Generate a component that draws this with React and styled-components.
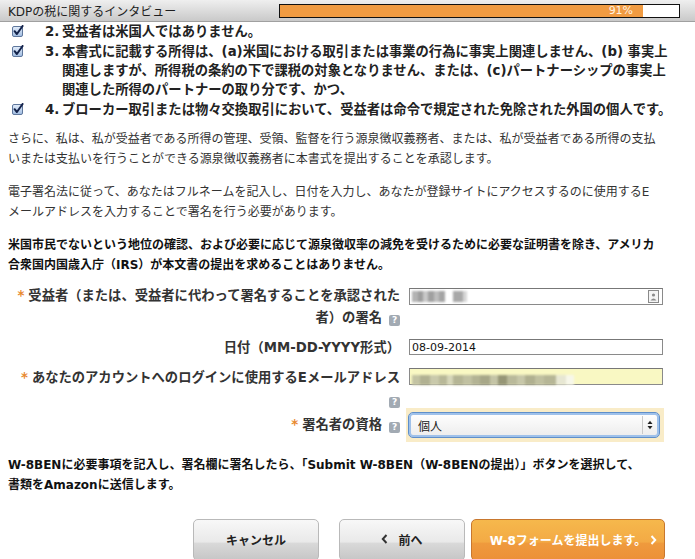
import React from "react";
import styled, { createGlobalStyle } from "styled-components";

const Global = createGlobalStyle`
  html, body { margin: 0; padding: 0; overflow: hidden; background: #fff; }
  body { font-family: "DejaVu Sans", "Noto Sans CJK JP", sans-serif; color: #333; }
`;

const Page = styled.div`
  width: 695px;
  height: 559px;
  display: flex;
  flex-direction: column;
  overflow: hidden;
`;

const Header = styled.header`
  height: 21px;
  flex-shrink: 0;
  display: flex;
  align-items: center;
  justify-content: space-between;
  padding: 0 15px 0 8px;
  background: linear-gradient(#efefef, #c9c9c9);
  border-bottom: 1px solid #a0a0a0;
`;

const Title = styled.div`
  font-size: 12px;
  color: #1e1e1e;
  white-space: nowrap;
`;

const Progress = styled.div`
  width: 399px;
  height: 12px;
  border: 1px solid #111;
  background: #fff;
  display: flex;
`;

const ProgressFill = styled.div`
  height: 100%;
  background: #f09b42;
  display: flex;
  align-items: center;
  justify-content: flex-end;
  padding-right: 10px;
  box-sizing: border-box;
  font-size: 11px;
  line-height: 12px;
  color: #fff4e2;
`;

const List = styled.div`
  display: flex;
  flex-direction: column;
  gap: 1px;
`;

const Item = styled.div`
  display: flex;
  align-items: flex-start;
  padding-left: 12px;
  font-size: 13.3px;
  font-weight: bold;
  line-height: 19px;
  color: #222;
`;

const CheckBox = styled.svg`
  flex-shrink: 0;
  width: 12px;
  height: 12px;
  margin-top: 3px;
  margin-right: 21px;
`;

const Num = styled.span`
  flex-shrink: 0;
  width: 17px;
  white-space: nowrap;
`;

const ItemText = styled.span`
  white-space: nowrap;
`;

const Para = styled.p`
  margin: ${(p) => p.$mt || 0}px 0 0 0;
  padding: 0 8px;
  font-size: 12px;
  line-height: 20px;
  white-space: nowrap;
  color: ${(p) => (p.$bold ? "#111" : "#333")};
  font-weight: ${(p) => (p.$bold ? "bold" : "normal")};
`;

const Form = styled.div`
  display: flex;
  flex-direction: column;
  margin-top: 10px;
`;

const FormRow = styled.div`
  display: grid;
  grid-template-columns: 392px 254px;
  column-gap: 9px;
  padding-left: 8px;
  margin-top: ${(p) => p.$mt || 0}px;
  align-items: start;
`;

const Label = styled.div`
  text-align: right;
  font-size: 13.3px;
  font-weight: bold;
  line-height: 22px;
  color: #333;
  white-space: nowrap;
  margin-top: ${(p) => p.$mt || 0}px;
`;

const Star = styled.span`
  color: #e8892f;
  margin-right: 4px;
`;

const Help = styled.span`
  display: inline-block;
  width: 11px;
  height: 11px;
  margin-left: 7px;
  border-radius: 2px;
  background: #a2aab3;
  color: #fff;
  font-size: 9px;
  font-weight: bold;
  line-height: 11px;
  text-align: center;
  vertical-align: -1px;
`;

const Input = styled.div`
  box-sizing: border-box;
  height: ${(p) => p.$h || 17}px;
  margin-top: ${(p) => p.$mt || 0}px;
  border: 1px solid #8a8a8a;
  border-top-color: #777;
  background: ${(p) => p.$bg || "#fff"};
  display: flex;
  align-items: center;
  justify-content: space-between;
  padding: 0 3px 0 2px;
  font-size: 11px;
  color: #111;
  overflow: visible;
`;

const Blur = styled.span`
  display: inline-flex;
  align-items: stretch;
  height: ${(p) => p.$h || 10}px;
  filter: blur(0.8px);
  margin-top: ${(p) => p.$mt || 0}px;
`;

const BlurBlock = styled.span`
  display: block;
  width: ${(p) => p.$w}px;
  background: ${(p) => p.$c};
`;

const ContactIcon = styled.svg`
  width: 11px;
  height: 13px;
  flex-shrink: 0;
`;

const SelectWrap = styled.div`
  margin-left: -3px;
  width: 258px;
  box-sizing: border-box;
  padding: 4px 4px 4px 2px;
  background: #f9ecc8;
`;

const Select = styled.div`
  box-sizing: border-box;
  height: 26px;
  border: 1px solid #5f8fca;
  box-shadow: inset 0 0 0 2px #9fc1ea;
  border-radius: 5px;
  background: linear-gradient(#ffffff, #ececec);
  display: flex;
  align-items: center;
  font-size: 12px;
  color: #222;
`;

const SelectText = styled.span`
  flex: 1;
  padding-left: 9px;
`;

const SelectArrows = styled.span`
  width: 14px;
  height: 18px;
  border-left: 1px solid #c9c9c9;
  display: flex;
  align-items: center;
  justify-content: center;
  margin-right: 2px;
`;

const Buttons = styled.div`
  display: flex;
  justify-content: flex-end;
  padding-right: 30px;
  margin-top: 24px;
  gap: 6px;
`;

const Button = styled.div`
  box-sizing: border-box;
  width: ${(p) => p.$w}px;
  height: 42px;
  margin-left: ${(p) => p.$ml || 0}px;
  border: 1px solid ${(p) => (p.$primary ? "#c8772e" : "#b9b9b9")};
  border-radius: 5px;
  background: ${(p) =>
    p.$primary
      ? "linear-gradient(#f6b84c, #f3aa45 55%, #ef9a3d 58%, #ec9038)"
      : "linear-gradient(#f8f8f8, #e9e9e9 55%, #d9d9d9 58%, #c6c6c6)"};
  display: flex;
  align-items: center;
  justify-content: center;
  gap: 10px;
  font-size: 12px;
  font-weight: bold;
  color: ${(p) => (p.$primary ? "#fff" : "#222")};
  position: relative;
  padding-bottom: 2px;
`;

const Chevron = styled.svg`
  width: 7px;
  height: 10px;
  flex-shrink: 0;
`;

const SubmitChevron = styled(Chevron)`
  position: absolute;
  right: 7px;
  top: 15px;
`;

function Check() {
  return (
    <CheckBox viewBox="0 0 12 12">
      <defs>
        <linearGradient id="cbg" x1="0" y1="0" x2="0" y2="1">
          <stop offset="0" stopColor="#e4eefb" />
          <stop offset="1" stopColor="#9fbbe0" />
        </linearGradient>
      </defs>
      <rect x="0.5" y="1.5" width="10" height="10" rx="1.5" fill="url(#cbg)" stroke="#5f779c" />
      <path d="M2.6 6.2 L4.9 9 L10.6 1" fill="none" stroke="#13224a" strokeWidth="2" strokeLinecap="round" strokeLinejoin="round" />
    </CheckBox>
  );
}

const nameBlocks = [
  [6, "#b3b3b3"], [5, "#9d9d9d"], [5, "#c8c8c8"], [6, "#a0a0a0"], [5, "#bdbdbd"], [6, "#a4a4a4"], [4, "#fff"], [4, "#fff"], [10, "#a8a8a8"], [4, "#d6d6d6"],
];
const mailBlocks = [
  [8, "#c3c3a3"], [10, "#b1b192"], [9, "#c9c9ab"], [8, "#b8b898"], [6, "#d6d6b9"], [10, "#b5b595"], [9, "#c1c1a2"], [8, "#b3b394"], [10, "#a7a788"], [8, "#c4c4a6"], [9, "#969676"], [10, "#b9b99a"], [8, "#c7c7a9"], [10, "#b0b090"], [9, "#c0c0a0"], [12, "#b6b696"], [10, "#e7e7d3"], [8, "#f7f7ea"],
];

export default function App() {
  return (
    <>
      <Global />
      <Page>
        <Header>
          <Title>KDPの税に関するインタビュー</Title>
          <Progress>
            <ProgressFill style={{ width: "91%" }}>91%</ProgressFill>
          </Progress>
        </Header>

        <List>
          <Item>
            <Check />
            <Num>2.</Num>
            <ItemText>受益者は米国人ではありません。</ItemText>
          </Item>
          <Item>
            <Check />
            <Num>3.</Num>
            <ItemText>
              本書式に記載する所得は、(a)米国における取引または事業の行為に事実上関連しません、(b) 事実上
              <br />
              関連しますが、所得税の条約の下で課税の対象となりません、または、(c)パートナーシップの事実上
              <br />
              関連した所得のパートナーの取り分です、かつ、
            </ItemText>
          </Item>
          <Item>
            <Check />
            <Num>4.</Num>
            <ItemText>ブローカー取引または物々交換取引において、受益者は命令で規定された免除された外国の個人です。</ItemText>
          </Item>
        </List>

        <Para $mt={10}>
          さらに、私は、私が受益者である所得の管理、受領、監督を行う源泉徴収義務者、または、私が受益者である所得の支払
          <br />
          いまたは支払いを行うことができる源泉徴収義務者に本書式を提出することを承認します。
        </Para>
        <Para $mt={13}>
          電子署名法に従って、あなたはフルネームを記入し、日付を入力し、あなたが登録サイトにアクセスするのに使用するE
          <br />
          メールアドレスを入力することで署名を行う必要があります。
        </Para>
        <Para $mt={13} $bold>
          米国市民でないという地位の確認、および必要に応じて源泉徴収率の減免を受けるために必要な証明書を除き、アメリカ
          <br />
          合衆国内国歳入庁（IRS）が本文書の提出を求めることはありません。
        </Para>

        <Form>
          <FormRow>
            <Label>
              <Star>*</Star>受益者（または、受益者に代わって署名することを承認された
              <br />
              者）の署名<Help>?</Help>
            </Label>
            <Input $mt={3} $h={17}>
              <Blur $h={11}>
                {nameBlocks.map(([w, c], i) => (
                  <BlurBlock key={i} $w={w} $c={c} />
                ))}
              </Blur>
              <ContactIcon viewBox="0 0 11 13">
                <rect x="0.5" y="0.5" width="10" height="12" fill="#f4f4f4" stroke="#8a8a8a" />
                <circle cx="5.5" cy="5" r="1.6" fill="#8a8a8a" />
                <path d="M2.5 10.5 Q5.5 6.5 8.5 10.5 Z" fill="#8a8a8a" />
              </ContactIcon>
            </Input>
          </FormRow>

          <FormRow $mt={8}>
            <Label>日付（MM-DD-YYYY形式）</Label>
            <Input $mt={2} $h={16}>08-09-2014</Input>
          </FormRow>

          <FormRow $mt={8}>
            <Label>
              <Star>*</Star>あなたのアカウントへのログインに使用するEメールアドレス
              <br />
              <Help>?</Help>
            </Label>
            <Input $mt={1} $h={17} $bg="#f9f8c3">
              <Blur $h={10} $mt={6}>
                {mailBlocks.map(([w, c], i) => (
                  <BlurBlock key={i} $w={w} $c={c} />
                ))}
              </Blur>
            </Input>
          </FormRow>

          <FormRow $mt={-3}>
            <Label $mt={6}>
              <Star>*</Star>署名者の資格<Help>?</Help>
            </Label>
            <SelectWrap>
              <Select>
                <SelectText>個人</SelectText>
                <SelectArrows>
                  <svg width="6" height="10" viewBox="0 0 6 10">
                    <path d="M0.5 4 L3 0.8 L5.5 4 Z" fill="#222" />
                    <path d="M0.5 6 L3 9.2 L5.5 6 Z" fill="#222" />
                  </svg>
                </SelectArrows>
              </Select>
            </SelectWrap>
          </FormRow>
        </Form>

        <Para $mt={13} $bold>
          W-8BENに必要事項を記入し、署名欄に署名したら、「Submit W-8BEN（W-8BENの提出）」ボタンを選択して、
          <br />
          書類をAmazonに送信します。
        </Para>

        <Buttons>
          <Button $w={126} $ml={0}>キャンセル</Button>
          <Button $w={126} $ml={14}>
            <Chevron viewBox="0 0 7 10">
              <path d="M5.5 1 L1.8 5 L5.5 9" fill="none" stroke="#333" strokeWidth="2" />
            </Chevron>
            前へ
          </Button>
          <Button $w={194} $primary>
            W-8フォームを提出します。
            <SubmitChevron viewBox="0 0 7 10">
              <path d="M1.5 1 L5.2 5 L1.5 9" fill="none" stroke="#fff" strokeWidth="2" />
            </SubmitChevron>
          </Button>
        </Buttons>
      </Page>
    </>
  );
}
